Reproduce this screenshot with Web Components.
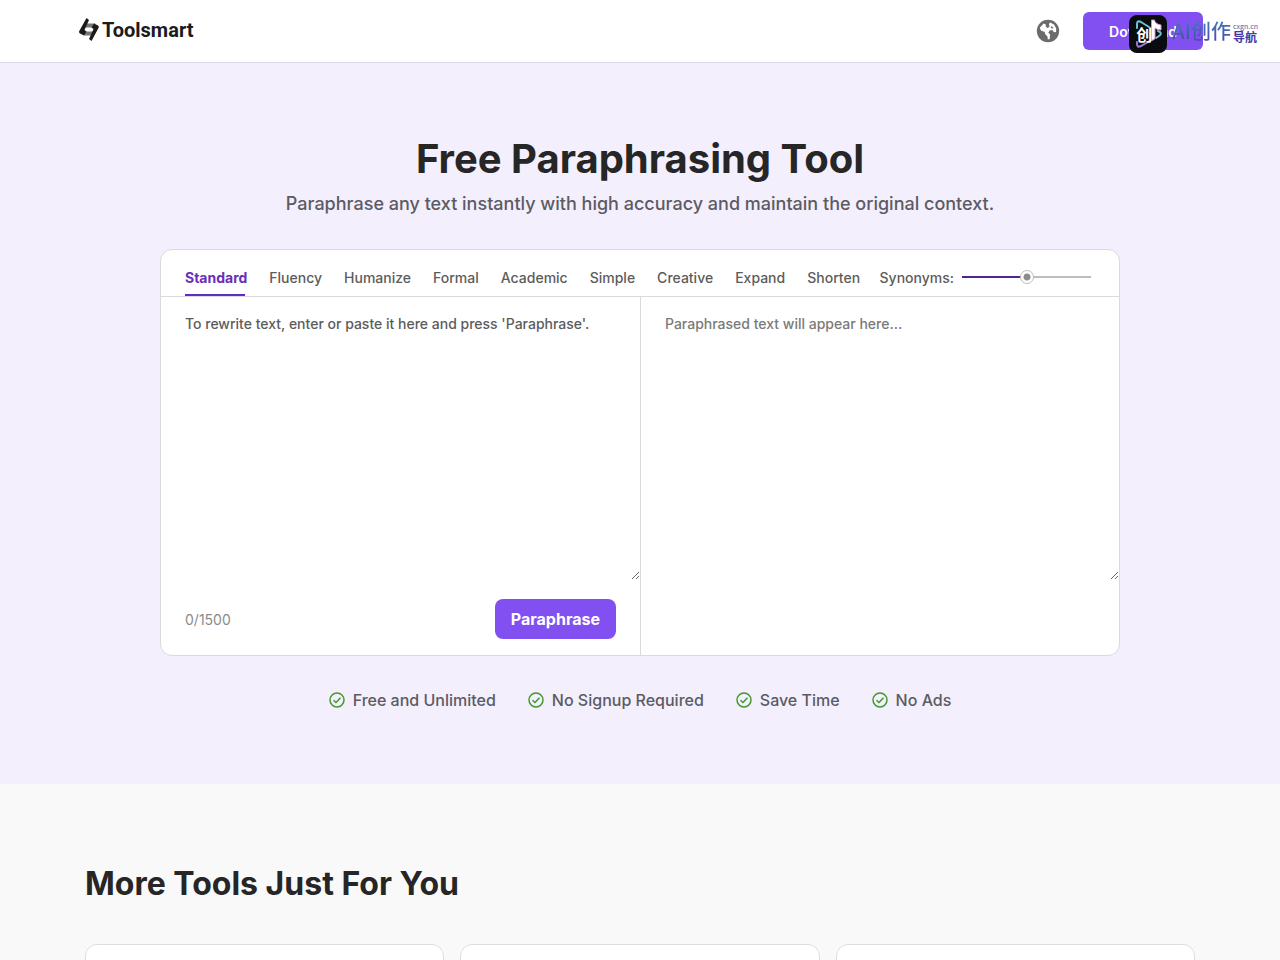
<!DOCTYPE html>
<html lang="en">
<head>
<meta charset="utf-8">
<meta name="viewport" content="width=device-width, initial-scale=1">
<title>Free Paraphrasing Tool | Toolsmart</title>
<style>
    body {
        margin: 0;
        background: #f9f9f9;
        color: #5c5b63;
        font-family: Inter, "Noto Sans CJK SC", sans-serif;
        overflow-x: hidden;
    }
</style>
</head>
<body>

<site-header></site-header>

<main>
    <tool-hero>
        <span slot="title">Free Paraphrasing Tool</span>
        <span slot="subtitle">Paraphrase any text instantly with high accuracy and maintain the original context.</span>
        <paraphrase-box></paraphrase-box>
        <feature-item slot="features">Free and Unlimited</feature-item>
        <feature-item slot="features">No Signup Required</feature-item>
        <feature-item slot="features">Save Time</feature-item>
        <feature-item slot="features">No Ads</feature-item>
    </tool-hero>

    <more-tools>
        <span slot="title">More Tools Just For You</span>
        <tool-card></tool-card>
        <tool-card></tool-card>
        <tool-card></tool-card>
    </more-tools>
</main>

<nav-badge></nav-badge>

<script>
const siteHeaderTemplate = document.createElement("template");
siteHeaderTemplate.innerHTML = `
    <style>
        :host {
            display: block;
            background: #fff;
            border-bottom: 1px solid #dddbe6;
        }

        header {
            display: flex;
            align-items: center;
            justify-content: space-between;
            max-width: 1124px;
            margin: 0 auto;
            padding: 12px 0 12px 2px;
        }

        .logo {
            display: flex;
            align-items: center;
            gap: 3px;
            padding-bottom: 3px;
            color: #1b1b1b;
            font: 700 20px/24px Roboto, sans-serif;
            text-decoration: none;
        }

        .actions {
            display: flex;
            align-items: center;
            gap: 22px;
        }

        button {
            border: 0;
            cursor: pointer;
            font-family: inherit;
        }

        .language {
            display: flex;
            padding: 0;
            background: none;
            color: #6b6b6b;
        }

        .download {
            width: 120px;
            height: 38px;
            border-radius: 6px;
            background: #8250f0;
            color: #fff;
            font-size: 14px;
            font-weight: 600;
        }
    </style>

    <header>
        <a class="logo" href="#">
            <svg width="20" height="23" viewBox="0 0 20 23" aria-hidden="true">
                <path fill="#777" d="M7 5.500H16.500L14.500 9.500H5.500ZM3 13.500H14L12 17.500H5Z"/>
                <path fill="#1b1b1b" d="M7.500 0 10 2 5.500 12 7.500 13.500 5 17.500 1 15.500Q-.5 14.500 .3 13ZM12.500 23 10 21 14.500 11 12.500 9.500 15 5.500 19 7.500Q20.300 8.500 19.500 10Z"/>
            </svg>
            <span>Toolsmart</span>
        </a>
        <div class="actions">
            <button class="language" aria-label="Language">
                <svg width="26" height="26" viewBox="0 0 24 24" aria-hidden="true">
                    <circle cx="12" cy="12" r="10.300" fill="currentColor"/>
                    <path fill="#fff" d="M4.400 9 8 5 10 6V8L11.500 9.300 13.500 8 12.800 5.500 14 4.200 17.500 6 19.500 9.500V13L17.500 13.200 16 11 13.500 11.500 12.300 13.500 14 15.300 13.500 19.500 11.800 19.600 11.500 17 9.300 14.800 9 13 5.500 11.500Z"/>
                    <path fill="currentColor" d="M15 7.500 17 8.500 16 10 14.500 9Z"/>
                </svg>
            </button>
            <button class="download">Download</button>
        </div>
    </header>
`

class SiteHeader extends HTMLElement {
    constructor () {
        super();
        this.attachShadow({mode: 'open'})
        this.shadowRoot.appendChild(siteHeaderTemplate.content.cloneNode(true))
    }
}

const toolHeroTemplate = document.createElement("template");
toolHeroTemplate.innerHTML = `
    <style>
        :host {
            display: block;
            padding: 72px 24px;
            background: #f3effd;
        }

        h1 {
            margin: 0;
            color: #262626;
            font-size: 40px;
            line-height: 48px;
            font-weight: 700;
            text-align: center;
        }

        p {
            margin: 8px 0 32px;
            font-size: 18px;
            line-height: 26px;
            font-weight: 500;
            text-align: center;
        }

        .features {
            display: flex;
            flex-wrap: wrap;
            justify-content: center;
            gap: 12px 32px;
            margin-top: 32px;
        }
    </style>

    <h1><slot name="title"></slot></h1>
    <p><slot name="subtitle"></slot></p>
    <slot></slot>
    <div class="features"><slot name="features"></slot></div>
`

class ToolHero extends HTMLElement {
    constructor () {
        super();
        this.attachShadow({mode: 'open'})
        this.shadowRoot.appendChild(toolHeroTemplate.content.cloneNode(true))
    }
}

const paraphraseBoxTemplate = document.createElement("template");
paraphraseBoxTemplate.innerHTML = `
    <style>
        :host {
            display: block;
            box-sizing: border-box;
            max-width: 960px;
            margin: 0 auto;
            border: 1px solid #dad9de;
            border-radius: 12px;
            background: #fff;
            overflow: hidden;
            color: #5c5c5c;
            font-size: 14px;
            font-weight: 500;
        }

        .toolbar {
            display: flex;
            align-items: center;
            justify-content: space-between;
            padding: 0 28px 0 24px;
            border-bottom: 1px solid #dad9de;
        }

        .modes {
            display: flex;
            gap: 22px;
        }

        .modes button {
            padding: 18px 0 8px;
            border: 0;
            background: none;
            color: inherit;
            cursor: pointer;
            font: inherit;
            line-height: 20px;
        }

        .modes button.active {
            background: linear-gradient(#5f2fb5, #5f2fb5) left bottom / 60px 2px no-repeat;
            color: #6a2fb8;
            font-weight: 700;
        }

        .synonyms {
            display: flex;
            align-items: center;
            gap: 8px;
            padding-top: 8px;
        }

        input {
            appearance: none;
            width: 129px;
            height: 14px;
            margin: 0;
            background: linear-gradient(90deg, #4d2490 50%, #bdbdbd 50%) center / 100% 2px no-repeat;
        }

        input::-webkit-slider-thumb {
            appearance: none;
            box-sizing: border-box;
            width: 14px;
            height: 14px;
            border: 1px solid #bdbdbd;
            border-radius: 50%;
            background: radial-gradient(circle, #8c8c8c 3px, #fff 4px);
        }

        .panes {
            display: grid;
            grid-template-columns: 1fr 1fr;
        }

        .pane + .pane {
            border-left: 1px solid #dad9de;
        }

        textarea {
            display: block;
            box-sizing: border-box;
            width: 100%;
            height: 283px;
            padding: 17px 24px;
            border: 0;
            outline: none;
            background: none;
            color: #5c5c5c;
            font: inherit;
            line-height: 20px;
        }

        textarea::placeholder {
            color: #5c5c5c;
        }

        textarea[readonly]::placeholder {
            color: #7a7a7a;
        }

        .footer {
            display: flex;
            align-items: center;
            justify-content: space-between;
            padding: 19px 24px 16px;
        }

        .count {
            color: #8b8b8b;
            font-weight: 400;
        }

        .submit {
            height: 40px;
            padding: 0 16px;
            border: 0;
            border-radius: 8px;
            background: #8250f0;
            color: #fff;
            cursor: pointer;
            font: 700 16px Inter, sans-serif;
        }
    </style>

    <div class="toolbar">
        <div class="modes">
            <button class="active">Standard</button>
            <button>Fluency</button>
            <button>Humanize</button>
            <button>Formal</button>
            <button>Academic</button>
            <button>Simple</button>
            <button>Creative</button>
            <button>Expand</button>
            <button>Shorten</button>
        </div>
        <div class="synonyms">
            <label for="level">Synonyms:</label>
            <input id="level" type="range" min="0" max="100" value="50">
        </div>
    </div>
    <div class="panes">
        <div class="pane">
            <textarea id="source" aria-label="Your text" placeholder="To rewrite text, enter or paste it here and press 'Paraphrase'."></textarea>
            <div class="footer">
                <span class="count">0/1500</span>
                <button class="submit">Paraphrase</button>
            </div>
        </div>
        <div class="pane">
            <textarea readonly aria-label="Result" placeholder="Paraphrased text will appear here..."></textarea>
        </div>
    </div>
`

class ParaphraseBox extends HTMLElement {
    constructor () {
        super();
        this.attachShadow({mode: 'open'})
        this.shadowRoot.appendChild(paraphraseBoxTemplate.content.cloneNode(true))

        const modes = this.shadowRoot.querySelectorAll(".modes button")
        modes.forEach(mode => mode.addEventListener("click", () => {
            modes.forEach(m => m.classList.toggle("active", m === mode))
        }))

        const source = this.shadowRoot.querySelector("#source")
        source.addEventListener("input", () => {
            this.shadowRoot.querySelector(".count").textContent = source.value.length + "/1500"
        })

        const level = this.shadowRoot.querySelector("#level")
        level.addEventListener("input", () => {
            level.style.backgroundImage = `linear-gradient(90deg, #4d2490 ${level.value}%, #bdbdbd ${level.value}%)`
        })
    }
}

const featureItemTemplate = document.createElement("template");
featureItemTemplate.innerHTML = `
    <style>
        :host {
            display: flex;
            align-items: center;
            gap: 8px;
            font-size: 16px;
            line-height: 24px;
            font-weight: 500;
        }
    </style>

    <svg width="16" height="16" viewBox="0 0 16 16" fill="none" stroke="#43992b" aria-hidden="true">
        <circle cx="8" cy="8" r="7" stroke-width="1.500"/>
        <path stroke-width="1.500" d="M4.500 8.200 7 10.500 11.500 5.700"/>
    </svg>
    <span><slot></slot></span>
`

class FeatureItem extends HTMLElement {
    constructor () {
        super();
        this.attachShadow({mode: 'open'})
        this.shadowRoot.appendChild(featureItemTemplate.content.cloneNode(true))
    }
}

const moreToolsTemplate = document.createElement("template");
moreToolsTemplate.innerHTML = `
    <style>
        :host {
            display: block;
            max-width: 1110px;
            margin: 0 auto;
            padding: 80px 24px;
        }

        h2 {
            margin: 0 0 40px;
            color: #262626;
            font-size: 32px;
            line-height: 40px;
            font-weight: 700;
        }

        .grid {
            display: grid;
            grid-template-columns: repeat(3, 1fr);
            gap: 16px;
        }
    </style>

    <h2><slot name="title"></slot></h2>
    <div class="grid"><slot></slot></div>
`

class MoreTools extends HTMLElement {
    constructor () {
        super();
        this.attachShadow({mode: 'open'})
        this.shadowRoot.appendChild(moreToolsTemplate.content.cloneNode(true))
    }
}

class ToolCard extends HTMLElement {
    constructor () {
        super();
        this.attachShadow({mode: 'open'})
        this.shadowRoot.innerHTML = `
            <style>
                :host {
                    display: block;
                    min-height: 180px;
                    border: 1px solid #dedede;
                    border-radius: 12px;
                    background: #fff;
                }
            </style>
            <slot></slot>
        `
    }
}

const navBadgeTemplate = document.createElement("template");
navBadgeTemplate.innerHTML = `
    <style>
        /* floats over the header, top right */
        :host {
            position: absolute;
            top: 15px;
            right: 22px;
            display: flex;
            align-items: center;
            pointer-events: none;
            font-family: "Noto Sans CJK SC", sans-serif;
        }

        .icon {
            display: grid;
            width: 38px;
            height: 38px;
            margin-right: 5px;
        }

        .icon svg, .icon span {
            grid-area: 1 / 1;
        }

        .icon span {
            align-self: center;
            padding-left: 7px;
            color: #fff;
            font-size: 16px;
            line-height: 20px;
            font-weight: 700;
        }

        .name {
            margin-right: 2px;
            padding-bottom: 6px;
            background: linear-gradient(#3f80bd, #4a3aa0);
            background-clip: text;
            color: transparent;
            font-size: 20px;
            line-height: 28px;
            font-weight: 500;
        }

        .side {
            display: flex;
            flex-direction: column;
            padding-bottom: 2px;
            color: #4538a0;
            font-size: 12px;
            line-height: 14px;
            font-weight: 700;
        }

        .side small {
            color: #4a5db0;
            font-size: 7px;
            line-height: 8px;
            font-weight: 400;
        }
    </style>

    <div class="icon">
        <svg width="38" height="38" viewBox="0 0 38 38" fill="none" aria-hidden="true">
            <rect width="38" height="38" rx="8" fill="#090b0f"/>
            <path stroke="#67c5d9" stroke-width="2" stroke-linecap="round" d="M8 13V9Q8 5 12 7L20 12M29 16 31 17Q33 19 30 21L27 23"/>
            <path stroke="#9a78d8" stroke-width="2" stroke-linecap="round" d="M8 27V29Q8 33 12 31L24 24"/>
            <path fill="#fff" stroke="#d68fd0" d="M22.500 5H25.500Q26 9 32 10V15Q28 15 26 13V23Q25 26 22.500 25Z"/>
        </svg>
        <span>创</span>
    </div>
    <span class="name">AI创作</span>
    <div class="side">
        <small>cxgn.cn</small>
        <span>导航</span>
    </div>
`

class NavBadge extends HTMLElement {
    constructor () {
        super();
        this.attachShadow({mode: 'open'})
        this.shadowRoot.appendChild(navBadgeTemplate.content.cloneNode(true))
    }
}

window.customElements.define('site-header', SiteHeader)
window.customElements.define('tool-hero', ToolHero)
window.customElements.define('paraphrase-box', ParaphraseBox)
window.customElements.define('feature-item', FeatureItem)
window.customElements.define('more-tools', MoreTools)
window.customElements.define('tool-card', ToolCard)
window.customElements.define('nav-badge', NavBadge)
</script>
</body>
</html>
